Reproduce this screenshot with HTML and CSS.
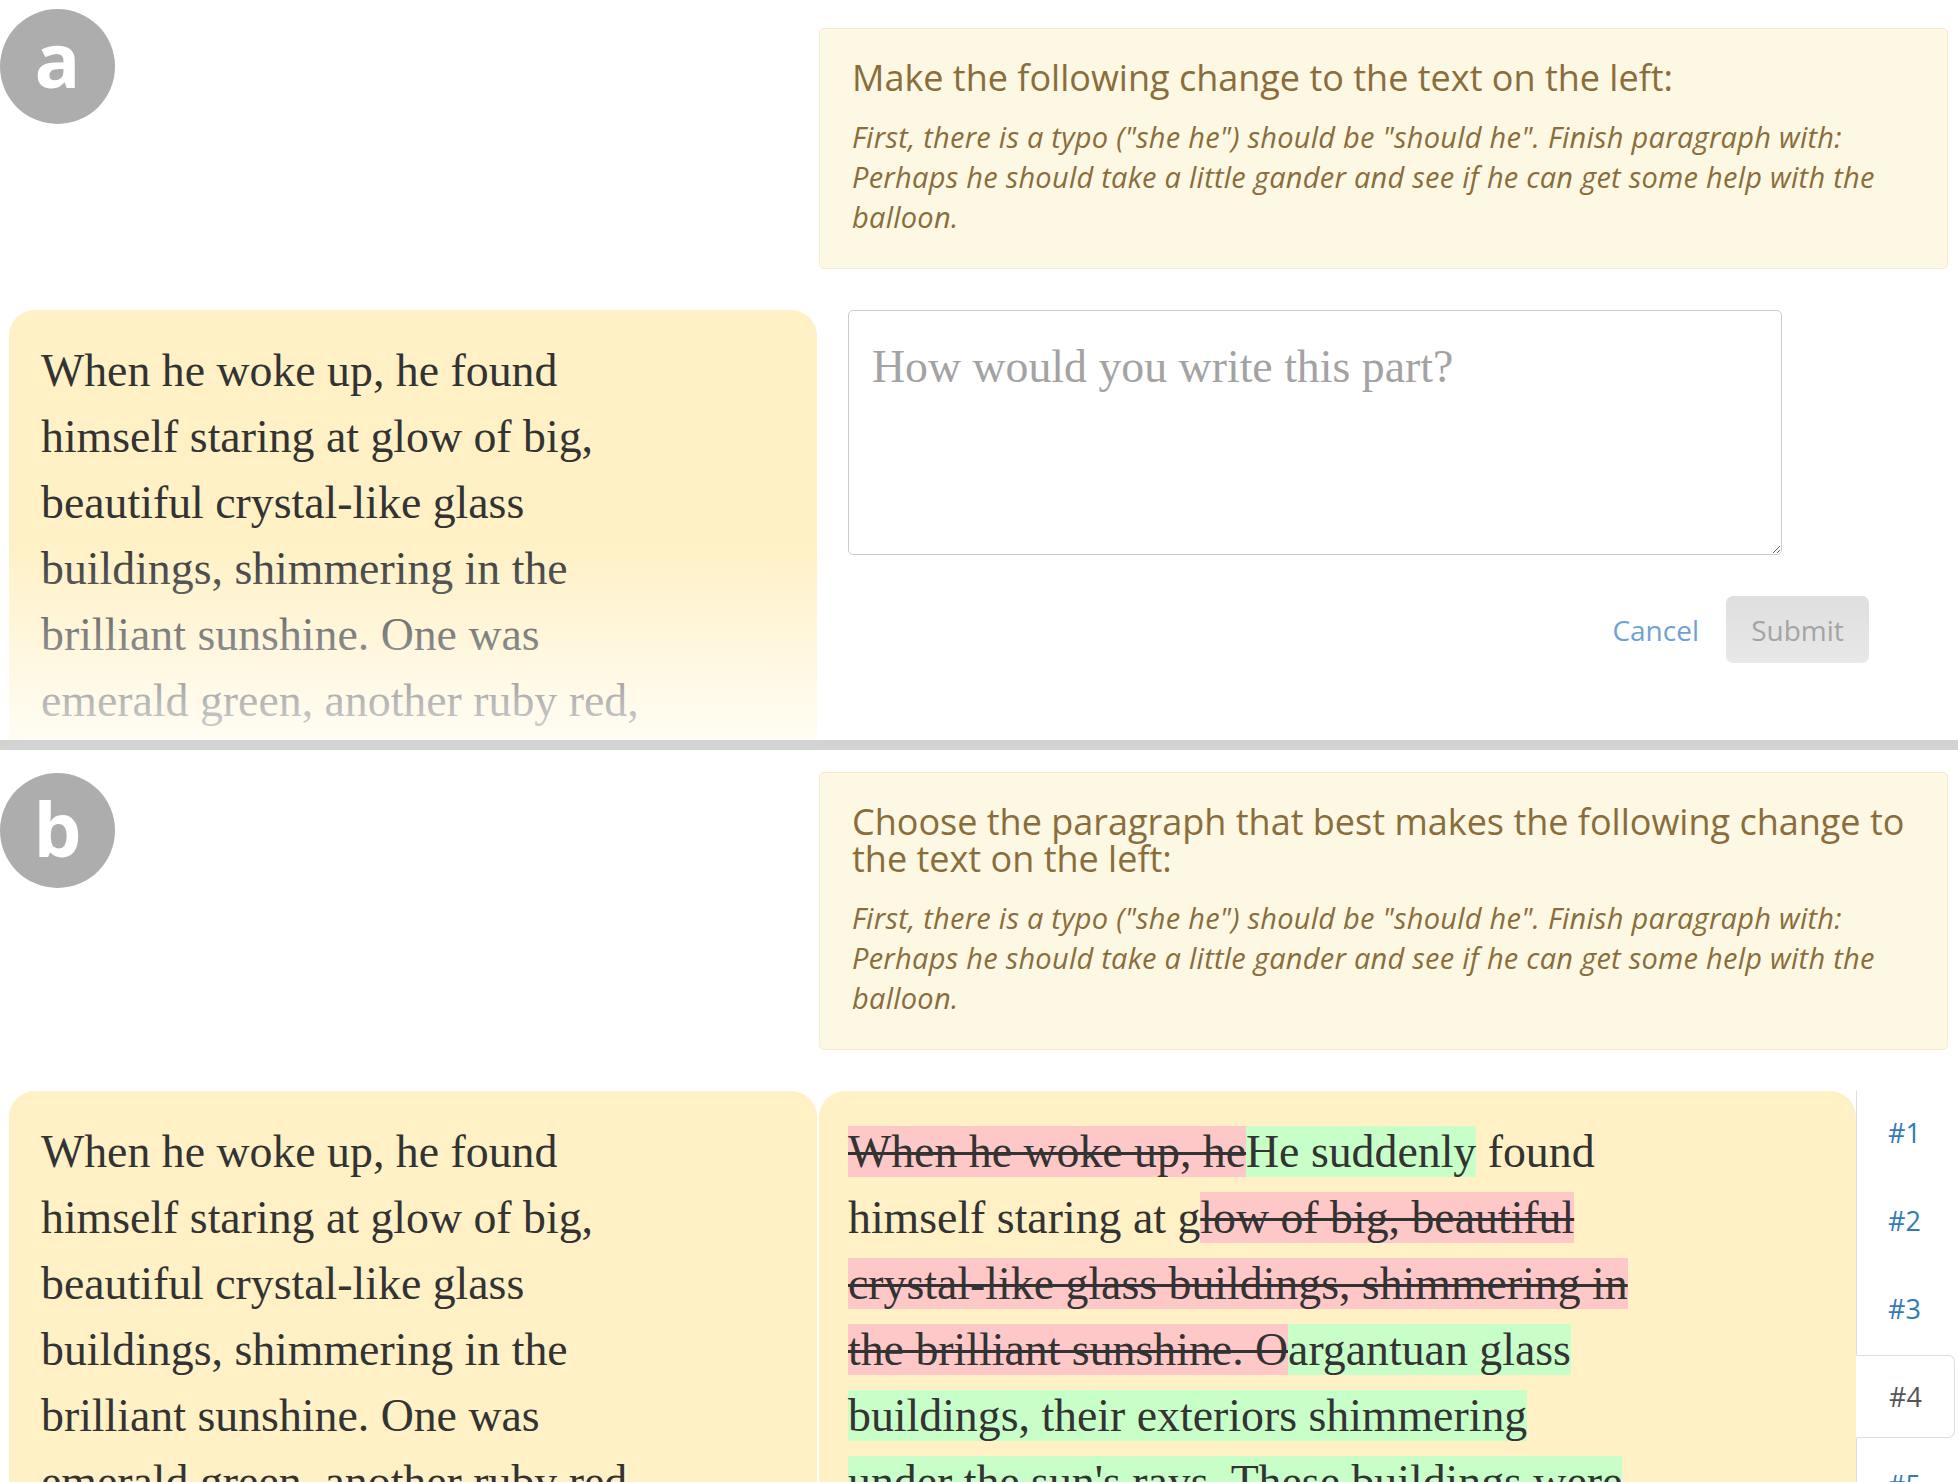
FILE: index.html
```html
<!DOCTYPE html>
<html lang="en">
<head>
<meta charset="utf-8">
<title>Paragraph editing tasks</title>
<link rel="stylesheet" href="styles.css">
</head>
<body>
<div class="page">
  <section class="task task-a">
    <div class="row row-top">
      <div class="col-left">
        <div class="badge badge-a">a</div>
      </div>
      <div class="col-right">
        <div class="alert">
          <h4 class="alert-title">Make the following change to the text on the left:</h4>
          <p class="alert-body">First, there is a typo ("she he") should be "should he". Finish paragraph with: Perhaps he should take a little gander and see if he can get some help with the balloon.</p>
        </div>
      </div>
    </div>
    <div class="row row-bottom">
      <div class="col-left">
        <div class="passage passage-faded">
          <p class="passage-text">When he woke up, he found<br>himself staring at glow of big,<br>beautiful crystal-like glass<br>buildings, shimmering in the<br>brilliant sunshine. One was<br>emerald green, another ruby red,</p>
        </div>
      </div>
      <div class="col-right">
        <textarea class="rewrite" placeholder="How would you write this part?"></textarea>
        <div class="actions">
          <a class="cancel" href="#">Cancel</a>
          <button class="submit" type="button" disabled>Submit</button>
        </div>
      </div>
    </div>
  </section>

  <div class="divider"></div>

  <section class="task task-b">
    <div class="row row-top">
      <div class="col-left">
        <div class="badge badge-b">b</div>
      </div>
      <div class="col-right">
        <div class="alert">
          <h4 class="alert-title">Choose the paragraph that best makes the following change to the text on the left:</h4>
          <p class="alert-body">First, there is a typo ("she he") should be "should he". Finish paragraph with: Perhaps he should take a little gander and see if he can get some help with the balloon.</p>
        </div>
      </div>
    </div>
    <div class="row row-bottom">
      <div class="col-left">
        <div class="passage">
          <p class="passage-text">When he woke up, he found<br>himself staring at glow of big,<br>beautiful crystal-like glass<br>buildings, shimmering in the<br>brilliant sunshine. One was<br>emerald green, another ruby red,<br>and yet another sapphire blue.</p>
        </div>
      </div>
      <div class="diff-panel">
        <p class="passage-text"><del>When he woke up, he</del><ins>He suddenly</ins> found<br>himself staring at g<del>low of big, beautiful</del><br><del>crystal-like glass buildings, shimmering in</del><br><del>the brilliant sunshine. O</del><ins>argantuan glass</ins><br><ins>buildings, their exteriors shimmering</ins><br><ins>under the sun's rays. These buildings were</ins><br><ins>every colour of the rainbow.</ins></p>
      </div>
      <ul class="tabs">
        <li class="tab"><a href="#">#1</a></li>
        <li class="tab"><a href="#">#2</a></li>
        <li class="tab"><a href="#">#3</a></li>
        <li class="tab active"><a href="#">#4</a></li>
        <li class="tab"><a href="#">#5</a></li>
        <li class="tab"><a href="#">#6</a></li>
      </ul>
    </div>
  </section>
</div>
</body>
</html>
```

FILE: styles.css
```css
html, body {
  margin: 0;
  padding: 0;
  background: #ffffff;
}

.page {
  width: 1958px;
  height: 1482px;
  overflow: hidden;
  font-family: "Open Sans", "Liberation Sans", sans-serif;
}

.task-a {
  height: 740px;
  overflow: hidden;
}

.row {
  display: flex;
  align-items: flex-start;
}

.col-left {
  width: 819px;
  flex: 0 0 819px;
}

.col-right {
  width: 1129px;
  flex: 0 0 1129px;
}

.row-bottom {
  margin-top: 41px;
}

/* circular labels */
.badge {
  width: 115px;
  height: 115px;
  border-radius: 50%;
  background: #adadad;
  color: #ffffff;
  font-family: "Open Sans", sans-serif;
  font-weight: 700;
  font-size: 76px;
  display: flex;
  align-items: center;
  justify-content: center;
  box-sizing: border-box;
}

.badge-a {
  margin-top: 9px;
  padding-bottom: 16px;
}

.badge-b {
  margin-top: 23px;
  padding-bottom: 6px;
}

/* instruction box */
.alert {
  background: #fcf8e3;
  border: 1px solid #faebcc;
  border-radius: 5px;
  color: #8a6d3b;
  padding: 30px 32px 31px;
}

.task-a .alert {
  margin-top: 28px;
}

.task-b .alert {
  margin-top: 22px;
}

.alert-title {
  margin: 0 0 21px;
  font-weight: 400;
  font-size: 36px;
  line-height: 37px;
}

.alert-body {
  margin: 0;
  font-style: italic;
  font-size: 29px;
  letter-spacing: 0.25px;
  line-height: 40px;
}

/* passage panels */
.passage {
  margin-left: 9px;
  width: 808px;
  background: #fff1c5;
  border-radius: 26px 26px 0 0;
  box-sizing: border-box;
  padding: 28px 20px 0 32px;
  height: 520px;
  overflow: hidden;
}

.task-a .passage {
  height: 430px;
  position: relative;
}

.passage-faded::after {
  content: "";
  position: absolute;
  left: 0;
  right: 0;
  bottom: 0;
  height: 200px;
  background: linear-gradient(to bottom, rgba(255, 255, 255, 0) 0%, rgba(255, 255, 255, 0.8) 100%);
}

.passage-text {
  margin: 0;
  font-family: "Liberation Serif", "Times New Roman", serif;
  font-size: 45.8px;
  line-height: 66px;
  color: #333333;
  white-space: nowrap;
}

/* rewrite form */
.rewrite {
  display: block;
  margin-left: 29px;
  width: 934px;
  height: 245px;
  box-sizing: border-box;
  border: 1px solid #cccccc;
  border-radius: 5px;
  padding: 23px 23px;
  font-family: "Liberation Serif", "Times New Roman", serif;
  font-size: 45.8px;
  line-height: 66px;
  color: #333333;
  background: #ffffff;
}

.rewrite::placeholder {
  color: #a3a3a3;
}

.actions {
  margin-top: 41px;
  display: flex;
  justify-content: flex-end;
  align-items: center;
  padding-right: 79px;
}

.cancel {
  font-family: "Open Sans", sans-serif;
  font-size: 28px;
  color: #6fa2d2;
  text-decoration: none;
  margin-right: 27px;
}

.submit {
  width: 143px;
  height: 67px;
  border: none;
  border-radius: 7px;
  background: linear-gradient(to bottom, #dfdfdf, #e8e8e8);
  color: #a4a4a4;
  font-family: "Open Sans", sans-serif;
  font-size: 28px;
  padding: 0;
}

.divider {
  height: 10px;
  background: #d3d3d3;
}

/* diff panel */
.diff-panel {
  width: 1037px;
  flex: 0 0 1037px;
  height: 520px;
  background: #fff1c5;
  border-radius: 26px 26px 0 0;
  box-sizing: border-box;
  padding: 28px 20px 0 29px;
  overflow: hidden;
}

.diff-panel del {
  background: #ffc8c8;
  text-decoration: line-through;
  text-decoration-thickness: 3px;
  text-decoration-color: #333333;
}

.diff-panel ins {
  background: #c8ffc8;
  text-decoration: none;
}

/* vertical tabs */
.tabs {
  list-style: none;
  margin: 0;
  padding: 0;
  flex: 1 1 auto;
  border-left: 1px solid #dddddd;
  min-height: 520px;
}

.tab {
  height: 83px;
  margin-bottom: 5px;
  box-sizing: border-box;
}

.tab a {
  display: block;
  height: 83px;
  line-height: 83px;
  padding-left: 31px;
  font-family: "Open Sans", sans-serif;
  font-size: 27px;
  color: #337ab7;
  text-decoration: none;
  box-sizing: border-box;
}

.tab.active a {
  color: #555555;
  background: #ffffff;
  border: 1px solid #dddddd;
  border-left-color: #ffffff;
  border-radius: 0 7px 7px 0;
  margin-left: -1px;
  margin-right: 3px;
  padding-left: 32px;
  line-height: 81px;
}
```
